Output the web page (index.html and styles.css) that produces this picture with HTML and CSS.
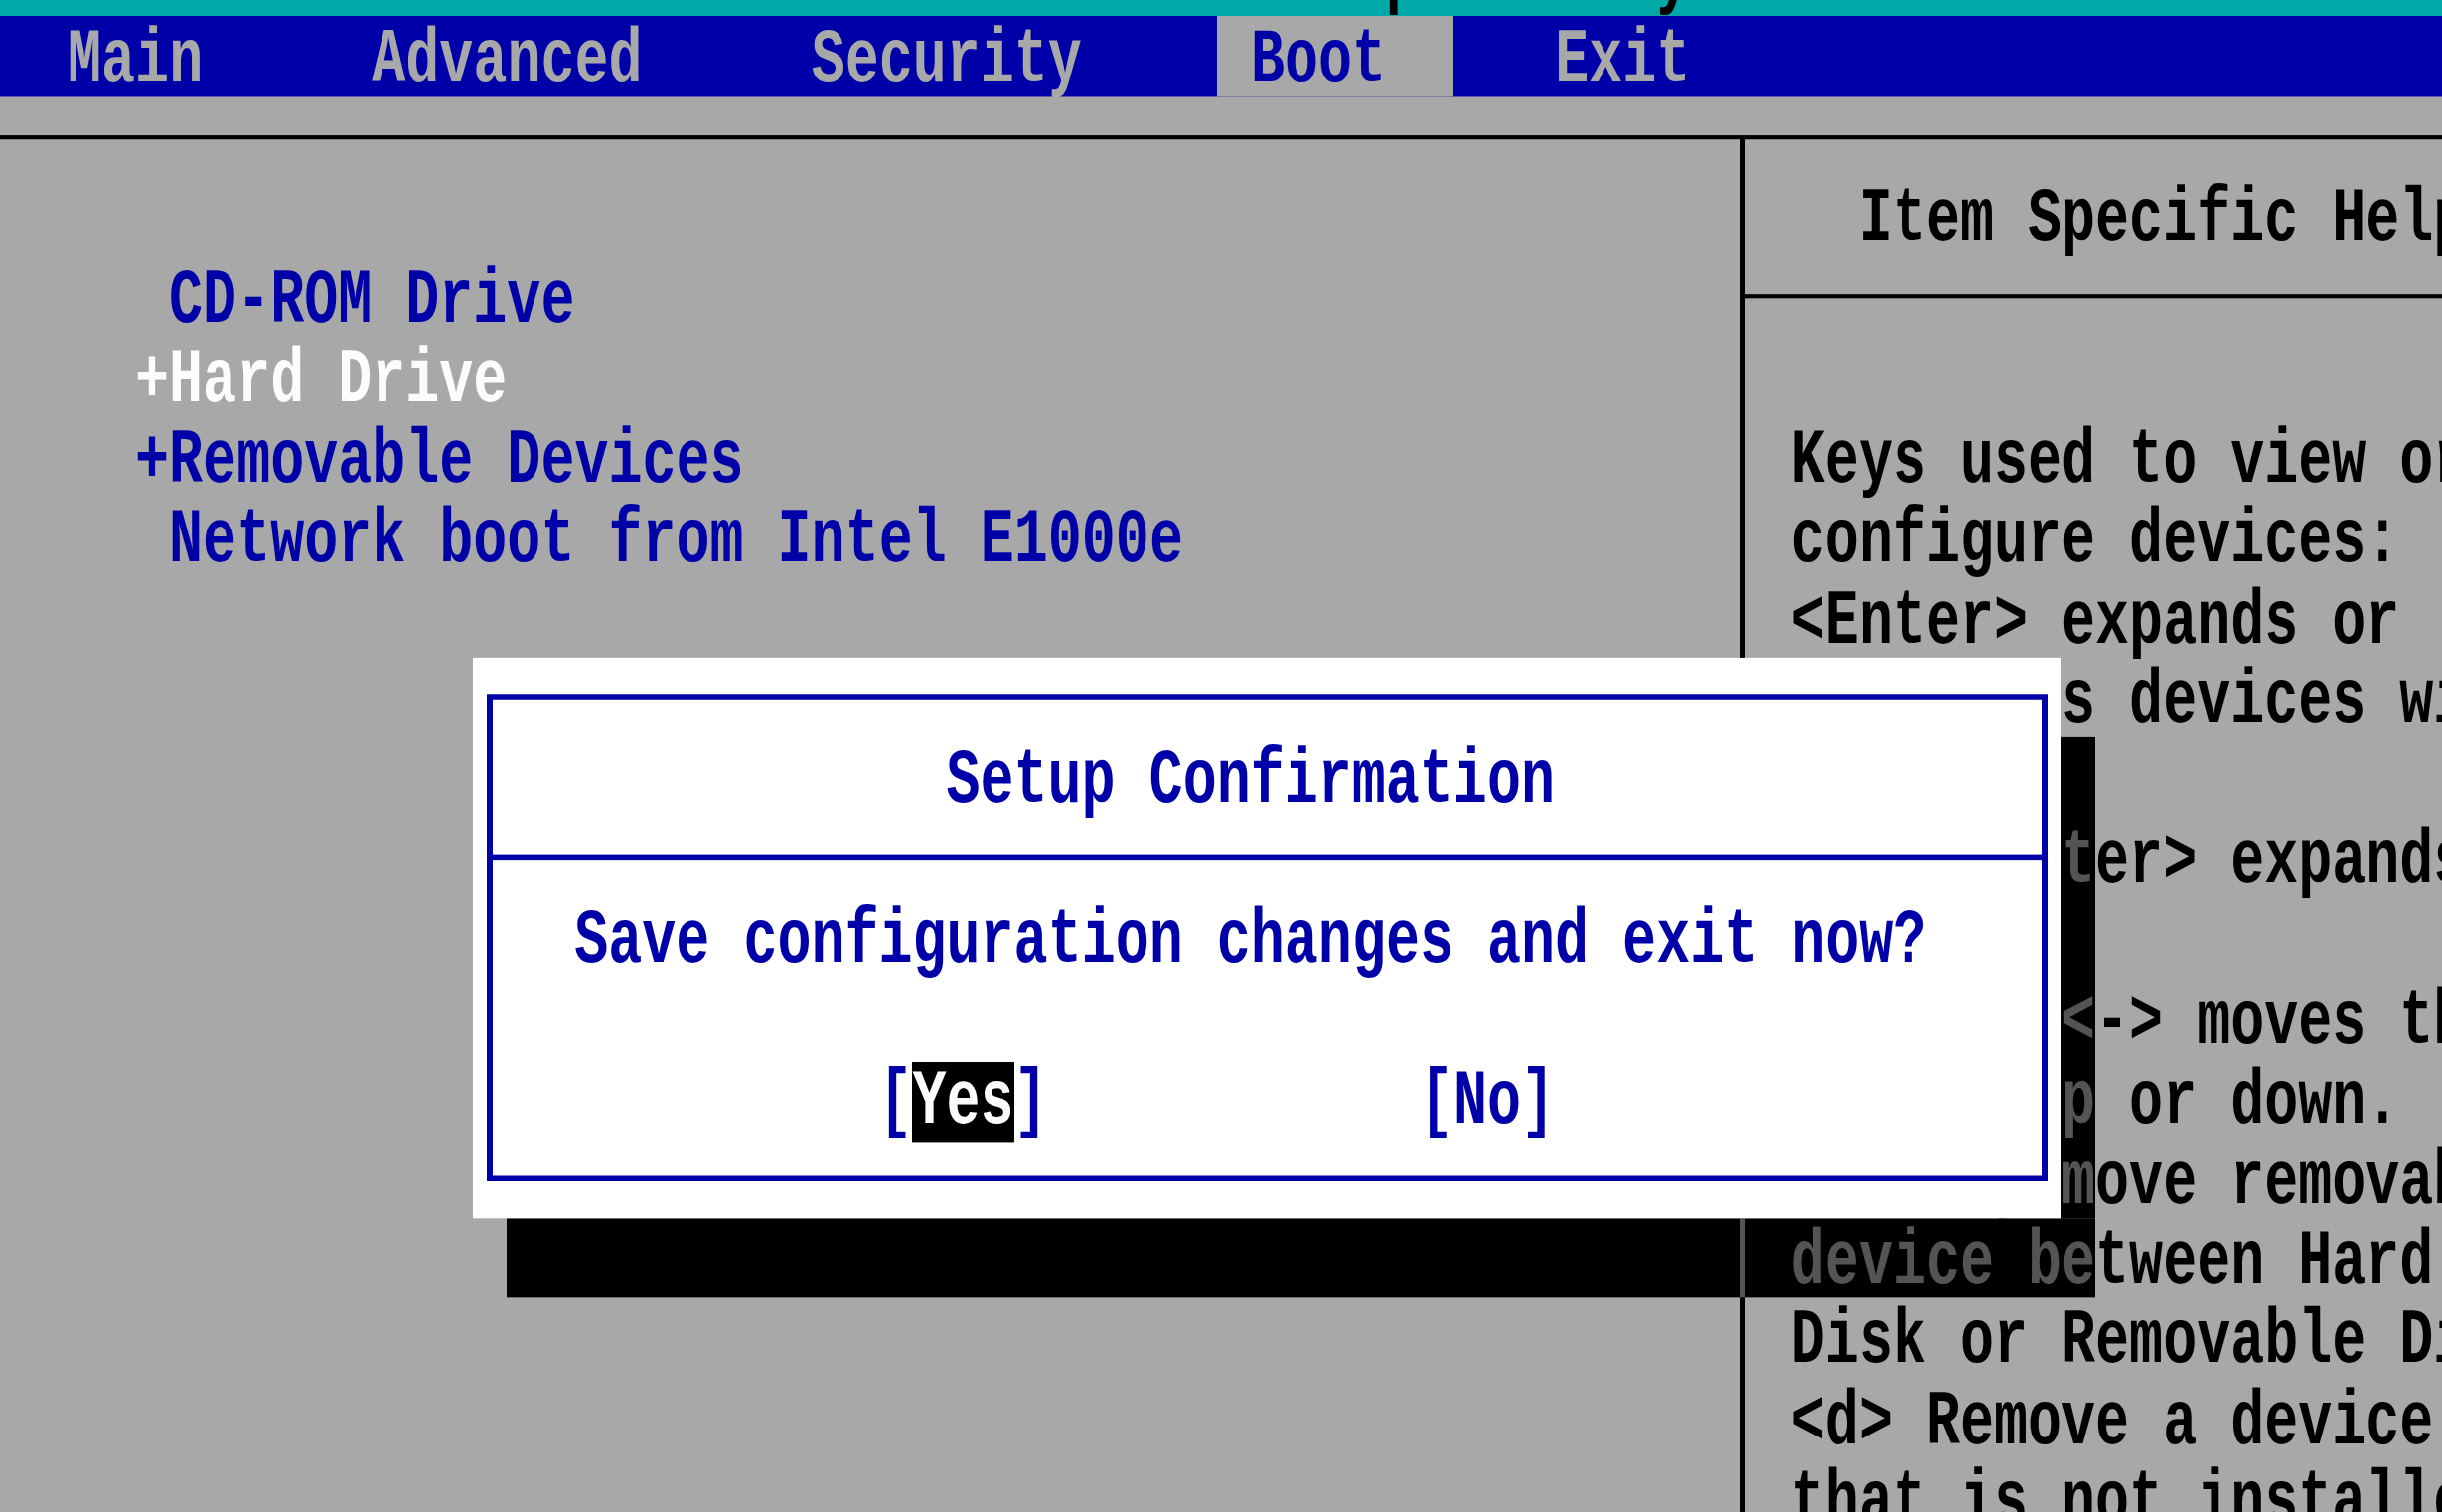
FILE: index.html
```html
<!DOCTYPE html>
<html lang="en">
<head>
<meta charset="utf-8">
<title>PhoenixBIOS Setup Utility</title>
<link rel="stylesheet" href="styles.css">
</head>
<body>
<div class="screen">
  <div class="titlebar"></div>
  <div class="tx title-text">PhoenixBIOS Setup Utility</div>

  <div class="menubar"></div>
  <div class="menu-sel"></div>
  <div class="tx menu-text">  Main     Advanced     Security     <span class="on">Boot</span>     Exit</div>

  <div class="rule"></div>
  <div class="vline"></div>

  <div class="tx help-title">Item Specific Help</div>
  <div class="help-rule"></div>

  <div class="tx item r4"> CD-ROM Drive</div>
  <div class="tx item r5 cur">+Hard Drive</div>
  <div class="tx item r6">+Removable Devices</div>
  <div class="tx item r7"> Network boot from Intel E1000e</div>

  <div class="shadow-r"></div>
  <div class="shadow-b"></div>
  <div class="vline-dim"></div>

  <div class="tx help r6">Keys used to view or</div>
  <div class="tx help r7">configure devices:</div>
  <div class="tx help r8">&lt;Enter&gt; expands or</div>
  <div class="tx help r9">collapses devices with</div>
  <div class="tx help r10">a + or -</div>
  <div class="tx help r11">&lt;Ctrl+En<span class="dim">t</span>er&gt; expands</div>
  <div class="tx help r12">all</div>
  <div class="tx help r13">&lt;+&gt; and <span class="dim">&lt;</span>-&gt; moves the</div>
  <div class="tx help r14">device u<span class="dim">p</span> or down.</div>
  <div class="tx help r15">&lt;n&gt; May <span class="dim">m</span>ove removable</div>
  <div class="tx help r16"><span class="dim">device be</span>tween Hard</div>
  <div class="tx help r17">Disk or Removable Disk</div>
  <div class="tx help r18">&lt;d&gt; Remove a device</div>
  <div class="tx help r19">that is not installed.</div>

  <div class="dialog">
    <div class="frame"></div>
    <div class="sep"></div>
    <div class="tx dtitle">Setup Confirmation</div>
    <div class="tx dmsg">Save configuration changes and exit now?</div>
    <div class="tx dbtns">[<span class="hl">Yes</span>]           [No]</div>
  </div>
</div>
</body>
</html>
```
FILE: styles.css
```css
:root {
  --cw: 34.03px;
  --k: 1.38;
  --rh: 58.424px;
  --dy: 3.2px;
  --blue: #0000a8;
  --teal: #00a8a8;
  --gray: #a8a8a8;
  --dim: #545454;
}

html, body {
  margin: 0;
  padding: 0;
  width: 2458px;
  height: 1522px;
  overflow: hidden;
  background: var(--gray);
}

.screen {
  display: grid;
  grid-template-columns: repeat(73, var(--cw));
  grid-template-rows: repeat(20, var(--rh));
  margin-top: -63.925px;
  transform: scaleY(var(--k));
  transform-origin: 0 0;
  font-family: "Liberation Mono", "DejaVu Sans Mono", monospace;
  font-weight: 700;
  font-size: 56.71px;
  line-height: var(--rh);
}

.tx {
  white-space: pre;
  padding-top: var(--dy);
  box-sizing: border-box;
}

/* row helpers */
.r4 { grid-row: 5; }
.r5 { grid-row: 6; }
.r6 { grid-row: 7; }
.r7 { grid-row: 8; }
.r8 { grid-row: 9; }
.r9 { grid-row: 10; }
.r10 { grid-row: 11; }
.r11 { grid-row: 12; }
.r12 { grid-row: 13; }
.r13 { grid-row: 14; }
.r14 { grid-row: 15; }
.r15 { grid-row: 16; }
.r16 { grid-row: 17; }
.r17 { grid-row: 18; }
.r18 { grid-row: 19; }
.r19 { grid-row: 20; }

/* title bar */
.titlebar {
  grid-row: 1;
  grid-column: 1 / -1;
  background: var(--teal);
}
.title-text {
  grid-row: 1;
  grid-column: 26 / span 25;
  padding-top: 2.4px;
  color: #000;
}

/* menu bar */
.menubar {
  grid-row: 2;
  grid-column: 1 / -1;
  background: var(--blue);
}
.menu-sel {
  grid-row: 2;
  grid-column: 37 / 44;
  background: var(--gray);
}
.menu-text {
  grid-row: 2;
  grid-column: 1 / -1;
  color: var(--gray);
}
.menu-text .on { color: var(--blue); }

/* frame lines */
.rule {
  grid-row: 3;
  grid-column: 1 / -1;
  align-self: center;
  height: 2.9px;
  background: #000;
}
.vline {
  grid-row: 3 / -1;
  grid-column: 52;
  justify-self: center;
  width: 5px;
  margin-top: calc(var(--rh) / 2);
  margin-left: 3px;
  background: #000;
}
.vline-dim {
  grid-row: 17;
  grid-column: 52;
  justify-self: center;
  width: 5px;
  margin-left: 3px;
  background: var(--dim);
}
.help-title {
  grid-row: 4;
  grid-column: 56 / -1;
  color: #000;
}
.help-rule {
  grid-row: 5;
  grid-column: 52 / -1;
  align-self: center;
  height: 2.9px;
  margin-left: calc(var(--cw) / 2);
  background: #000;
}

/* boot list */
.item {
  grid-column: 5 / 50;
  color: var(--blue);
}
.item.cur { color: #fcfcfc; }

/* help text */
.help {
  grid-column: 54 / -1;
  color: #000;
}
.dim { color: var(--dim); }

/* dialog shadow */
.shadow-r {
  grid-row: 11 / 17;
  grid-column: 62;
  background: #000;
}
.shadow-b {
  grid-row: 17;
  grid-column: 16 / 63;
  background: #000;
}

/* dialog */
.dialog {
  grid-row: 10 / 17;
  grid-column: 15 / 62;
  display: grid;
  grid-template-columns: repeat(47, var(--cw));
  grid-template-rows: repeat(7, var(--rh));
  background: #fff;
  color: var(--blue);
}
.frame {
  grid-area: 1 / 1 / 8 / 48;
  margin: calc(var(--rh) / 2 - 2.17px) calc(var(--cw) / 2 - 3px);
  border-style: solid;
  border-color: var(--blue);
  border-width: 4.35px 6px;
}
.sep {
  grid-row: 3;
  grid-column: 1 / 48;
  align-self: center;
  height: 4.35px;
  margin: 0 calc(var(--cw) / 2 - 3px);
  background: var(--blue);
}
.dtitle {
  grid-row: 2;
  grid-column: 15 / span 18;
}
.dmsg {
  grid-row: 4;
  grid-column: 4 / span 40;
}
.dbtns {
  grid-row: 6;
  grid-column: 13 / span 20;
}
.hl {
  display: inline-block;
  height: var(--rh);
  background: #000;
  color: #fcfcfc;
}
```
